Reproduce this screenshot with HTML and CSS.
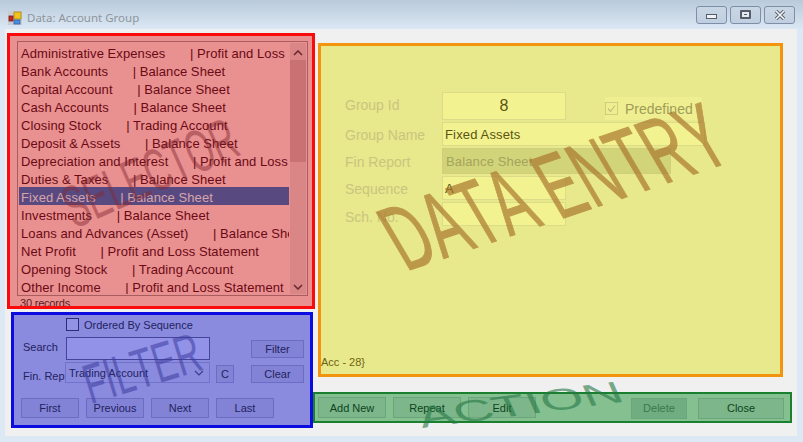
FILE: index.html
```html
<!DOCTYPE html>
<html lang="en">
<head>
  <meta charset="UTF-8" />
  <title>Data: Account Group</title>
  <link rel="stylesheet" href="styles.css">
</head>
<body>
  <div class="window">
    <div class="titlebar">
      <svg class="app-icon" width="14" height="14" viewBox="0 0 14 14">
        <rect x="0" y="0" width="14" height="14" fill="#c9ccd2"/>
        <rect x="6" y="1" width="7" height="7" fill="#f2c21f" stroke="#a88510" stroke-width="0.8"/>
        <rect x="1" y="5" width="4" height="5" fill="#c8261c" stroke="#7a1a14" stroke-width="0.8"/>
        <rect x="6" y="9" width="6" height="4" fill="#4d8ee0" stroke="#2a5ea0" stroke-width="0.8"/>
      </svg>
      <span class="title">Data: Account Group</span>
      <div class="win-buttons">
        <div class="win-btn"><span class="ico-min"></span></div>
        <div class="win-btn"><span class="ico-max"></span></div>
        <div class="win-btn">
          <svg width="12" height="10" viewBox="0 0 12 10"><path d="M2 1 L10 9 M10 1 L2 9" stroke="#555d6b" stroke-width="3.4" fill="none"/><path d="M2 1 L10 9 M10 1 L2 9" stroke="#f4f6f9" stroke-width="1.6" fill="none"/></svg>
        </div>
      </div>
    </div>

    <div class="client">
      <div class="col-left">
        <div class="selector">
          <div class="listbox">
            <ul class="list">
              <li>Administrative Expenses       | Profit and Loss Statement</li>
              <li>Bank Accounts       | Balance Sheet</li>
              <li>Capital Account       | Balance Sheet</li>
              <li>Cash Accounts       | Balance Sheet</li>
              <li>Closing Stock       | Trading Account</li>
              <li>Deposit &amp; Assets       | Balance Sheet</li>
              <li>Depreciation and Interest       | Profit and Loss Statement</li>
              <li>Duties &amp; Taxes       | Balance Sheet</li>
              <li class="selected">Fixed Assets       | Balance Sheet</li>
              <li>Investments       | Balance Sheet</li>
              <li>Loans and Advances (Asset)       | Balance Sheet</li>
              <li>Net Profit       | Profit and Loss Statement</li>
              <li>Opening Stock       | Trading Account</li>
              <li>Other Income       | Profit and Loss Statement</li>
            </ul>
            <div class="scrollbar">
              <svg class="arrow" width="10" height="6" viewBox="0 0 10 6"><path d="M1 5 L5 1 L9 5" fill="none" stroke="#6a2a30" stroke-width="1.6"/></svg>
              <div class="thumb"></div>
              <svg class="arrow" width="10" height="6" viewBox="0 0 10 6"><path d="M1 1 L5 5 L9 1" fill="none" stroke="#6a2a30" stroke-width="1.6"/></svg>
            </div>
          </div>
          <div class="records">30 records</div>
        </div>

        <div class="filter">
          <label class="order-row"><span class="checkbox"></span>Ordered By Sequence</label>
          <div class="search-row">
            <span class="f-label f-label-search">Search</span>
            <div class="search-input"></div>
            <div class="btn btn-side">Filter</div>
          </div>
          <div class="finrep-row">
            <span class="f-label">Fin. Rep</span>
            <div class="combo">Trading Account
              <svg width="10" height="6" viewBox="0 0 10 6"><path d="M1 1 L5 5 L9 1" fill="none" stroke="#3c3c90" stroke-width="1.2"/></svg>
            </div>
            <div class="btn btn-c">C</div>
            <div class="btn btn-side">Clear</div>
          </div>
          <div class="nav-row">
            <div class="btn btn-nav">First</div>
            <div class="btn btn-nav">Previous</div>
            <div class="btn btn-nav">Next</div>
            <div class="btn btn-nav">Last</div>
          </div>
        </div>
      </div>

      <div class="col-right">
        <div class="entry">
          <div class="form">
            <span class="e-label e-label-id">Group Id</span>
            <div class="id-row">
              <div class="field field-id">8</div>
              <div class="predefined">
                <svg width="13" height="13" viewBox="0 0 13 13"><rect x="0.5" y="0.5" width="12" height="12" fill="none" stroke="#d0cc80"/><path d="M3 6.5 L5.5 9.5 L10 3.5" fill="none" stroke="#c4c07a" stroke-width="1.2"/></svg>
                <span>Predefined</span>
              </div>
            </div>
            <span class="e-label">Group Name</span>
            <div class="field field-name">Fixed Assets</div>
            <span class="e-label">Fin Report</span>
            <div class="field field-report">Balance Sheet</div>
            <span class="e-label">Sequence</span>
            <div class="field field-short">A</div>
            <span class="e-label e-label-sch">Sch. No.</span>
            <div class="field field-short"></div>
          </div>
          <div class="acc">Acc - 28}</div>
        </div>

        <div class="action">
          <div class="btn-act">Add New</div>
          <div class="btn-act">Repeat</div>
          <div class="btn-act">Edit</div>
          <div class="btn-act btn-delete">Delete</div>
          <div class="btn-act btn-close">Close</div>
        </div>
      </div>
    </div>

    <div class="mark mark-selector">SELECTOR</div>
    <div class="mark mark-filter">FILTER</div>
    <div class="mark mark-entry">DATA ENTRY</div>
    <div class="mark mark-action">ACTION</div>
  </div>
</body>
</html>
```

FILE: styles.css
```css
* {
  box-sizing: border-box;
}

html, body {
  margin: 0;
  padding: 0;
}

body {
  width: 803px;
  height: 442px;
  overflow: hidden;
  background-color: #dce8f4;
  font-family: 'Liberation Sans', Arial, sans-serif;
  font-size: 13px;
}

.window {
  position: relative;
  width: 803px;
  height: 442px;
  overflow: hidden;
}

/* title bar */
.titlebar {
  display: flex;
  align-items: center;
  height: 29px;
  padding: 0 8px;
  background: linear-gradient(#b9cada, #dbe7f4);
}

.app-icon {
  margin-top: 6px;
}

.title {
  margin: 6px 0 0 5px;
  color: #8e959c;
  font-family: 'Noto Sans', sans-serif;
  font-size: 11.5px;
}

.win-buttons {
  display: flex;
  gap: 3px;
  margin-left: auto;
}

.win-btn {
  display: flex;
  align-items: center;
  justify-content: center;
  width: 31px;
  height: 18px;
  border: 1px solid #7e8ea8;
  border-radius: 3px;
  background: linear-gradient(#c9d6e4, #c0cfe0);
}

.ico-min {
  width: 11px;
  height: 5px;
  margin-top: 3px;
  border: 1px solid #555d6b;
  background-color: #eef1f5;
}

.ico-max {
  display: flex;
  align-items: center;
  justify-content: center;
  width: 11px;
  height: 9px;
  border: 2px solid #555d6b;
  border-radius: 1px;
  background-color: #e4e9ef;
}

.ico-max::after {
  content: "";
  width: 3px;
  height: 1px;
  background-color: #555d6b;
}

/* client area */
.client {
  display: flex;
  width: 792px;
  height: 407px;
  margin-left: 5px;
  padding: 4px 0 0 2px;
  background-color: #f0f0f0;
}

.col-left {
  width: 308px;
}

.col-right {
  position: relative;
  width: 470px;
}

/* selector */
.selector {
  height: 276px;
  padding: 5px 0 0 7px;
  border: 3px solid #fa0a0a;
  background-color: #e99090;
  color: #6b0a14;
  overflow: hidden;
}

.listbox {
  display: flex;
  width: 291px;
  height: 255px;
  padding: 1px;
  border: 1px solid #a85c5e;
}

.list {
  flex: 1;
  min-width: 0;
  margin: 0 1px 0 0;
  padding: 0;
  list-style: none;
  overflow: hidden;
}

.list li {
  height: 18px;
  padding-left: 2px;
  line-height: 21px;
  letter-spacing: 0.1px;
  word-spacing: -0.2px;
  white-space: pre;
  overflow: hidden;
}

.list li.selected {
  background-color: #584a80;
  color: #d8a4ac;
}

.scrollbar {
  display: flex;
  flex-direction: column;
  align-items: center;
  justify-content: space-between;
  width: 16px;
  background-color: #da8686;
}

.arrow {
  flex: none;
  margin: 7px 0 4px;
}

.thumb {
  flex: none;
  width: 100%;
  height: 102px;
  margin-bottom: auto;
  background-color: #c87274;
}

.records {
  margin: 1px 0 0 3px;
  font-size: 11px;
  line-height: 13px;
  letter-spacing: -0.2px;
  color: #5a1a20;
}

/* filter */
.filter {
  width: 302px;
  height: 116px;
  margin: 3px 0 0 4px;
  padding: 3px 0 0 7px;
  border: 3px solid #0c0ce0;
  background-color: #8a8ade;
  color: #22225e;
  font-size: 11px;
}

.order-row {
  display: flex;
  align-items: center;
  gap: 5px;
  height: 13px;
  margin-left: 45px;
}

.checkbox {
  width: 13px;
  height: 13px;
  border: 1px solid #2c2c78;
  background-color: #9292e6;
}

.search-row,
.finrep-row,
.nav-row {
  display: flex;
}

.search-row {
  align-items: center;
  height: 23px;
  margin: 6px 0 0 2px;
}

.f-label {
  width: 43px;
  flex: none;
  white-space: nowrap;
}

.f-label-search {
  padding-bottom: 4px;
}

.search-input {
  width: 144px;
  height: 23px;
  border: 1px solid #44449a;
  background-color: #9292e8;
}

.btn {
  display: flex;
  align-items: center;
  justify-content: center;
  height: 18px;
  border: 1px solid #6c6cc4;
  background-color: #8282d6;
}

.btn-side {
  width: 53px;
  margin-left: 41px;
}

.finrep-row {
  align-items: center;
  height: 21px;
  margin: 2px 0 0 2px;
}

.finrep-row .f-label {
  margin-top: 6px;
}

.combo {
  display: flex;
  align-items: center;
  justify-content: space-between;
  width: 145px;
  height: 21px;
  margin-left: -1px;
  padding: 0 5px 0 3px;
  border: 1px solid #7272ca;
}

.btn-c {
  width: 18px;
  margin: 3px 0 0 6px;
}

.finrep-row .btn-side {
  margin: 3px 0 0 17px;
}

.nav-row {
  gap: 7px;
  margin: 15px 0 0;
}

.btn-nav {
  width: 58px;
  height: 20px;
}

/* data entry */
.entry {
  position: relative;
  width: 465px;
  height: 334px;
  margin: 10px 0 0 3px;
  padding: 46px 0 0 24px;
  border: 3px solid #f3940f;
  background-color: #e8e88c;
}

.form {
  display: grid;
  grid-template-columns: 97px auto;
  grid-template-rows: 28px 24px 26px 24px 24px;
  row-gap: 2px;
  align-items: center;
  font-size: 14px;
}

.e-label {
  padding-top: 2px;
  color: #c8c67e;
}

.e-label-id {
  padding-top: 0;
  padding-bottom: 3px;
}

.e-label-sch {
  padding-top: 5px;
}

.id-row {
  display: flex;
  align-items: flex-end;
  height: 28px;
}

.field {
  height: 100%;
  border: 1px solid #dcdc88;
  background-color: #f2f290;
  color: #5c5410;
  letter-spacing: 0.15px;
}

.field-id {
  display: flex;
  align-items: center;
  justify-content: center;
  width: 124px;
  height: 28px;
  font-size: 16px;
}

.predefined {
  display: flex;
  align-items: center;
  gap: 7px;
  width: 97px;
  height: 23px;
  margin-left: 39px;
  background-color: #efef92;
  color: #a09c58;
  font-size: 14px;
}

.field-name {
  display: flex;
  align-items: center;
  width: 263px;
  padding-left: 2px;
  font-size: 13px;
}

.field-report {
  display: flex;
  align-items: center;
  width: 229px;
  padding-left: 3px;
  border-color: #d0d07c;
  background-color: #d2d47a;
  color: #a4a45c;
  font-size: 13px;
}

.field-short {
  display: flex;
  align-items: center;
  width: 124px;
  padding-left: 2px;
  font-size: 13px;
}

.acc {
  position: absolute;
  left: 0;
  bottom: 6px;
  color: #6e6410;
  font-size: 11px;
}

/* action */
.action {
  display: flex;
  align-items: center;
  gap: 7px;
  width: 479px;
  height: 31px;
  margin: 15px 0 0 -2px;
  padding: 0 6px 0 3px;
  border: 2px solid #1a8030;
  background-color: #84c090;
  color: #0e4420;
  font-size: 11px;
}

.btn-act {
  display: flex;
  align-items: center;
  justify-content: center;
  width: 68px;
  height: 21px;
  border: 1px solid #6aa67a;
  background-color: #7cb68a;
}

.btn-delete {
  width: 56px;
  margin: 1px 0 0 88px;
  background-color: #70ad80;
  color: #3c7a4c;
}

.btn-close {
  width: 86px;
  margin: 1px 0 0 4px;
}

/* overlaid region names */
.mark {
  position: absolute;
  font-family: 'Liberation Sans', Arial, sans-serif;
  font-kerning: none;
  white-space: nowrap;
  pointer-events: none;
}

.mark-selector {
  left: 150px;
  top: 173px;
  color: #822832;
  opacity: 0.45;
  font-size: 60px;
  transform: translate(-50%, -50%) rotate(-24deg) scaleX(0.57);
}

.mark-filter {
  left: 142px;
  top: 368px;
  color: #3c3ca0;
  opacity: 0.55;
  font-size: 56px;
  transform: translate(-50%, -50%) rotate(-17deg) scaleX(0.62);
}

.mark-entry {
  left: 554px;
  top: 187px;
  color: #a8742c;
  opacity: 0.68;
  font-size: 92px;
  -webkit-text-stroke: 1px #a8742c;
  transform: translate(-50%, -50%) scaleX(1.32) rotate(-24deg) scaleX(0.47);
}

.mark-action {
  left: 520px;
  top: 405px;
  color: #287846;
  opacity: 0.6;
  font-size: 30px;
  transform: translate(-50%, -50%) scaleX(1.85) rotate(-13.5deg);
}
```
